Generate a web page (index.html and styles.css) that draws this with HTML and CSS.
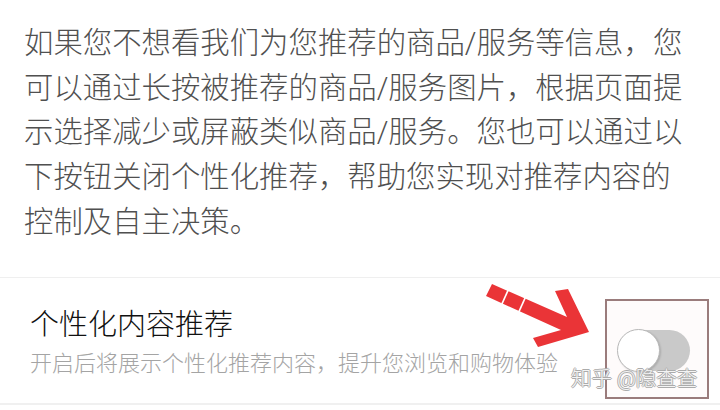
FILE: index.html
```html
<!DOCTYPE html>
<html lang="zh-CN">
<head>
<meta charset="utf-8">
<link rel="stylesheet" href="styles.css">
</head>
<body>
<div class="page">
  <p class="intro">如果您不想看我们为您推荐的商品/服务等信息，您可以通过长按被推荐的商品/服务图片，根据页面提示选择减少或屏蔽类似商品/服务。您也可以通过以下按钮关闭个性化推荐，帮助您实现对推荐内容的控制及自主决策。</p>
  <div class="setting">
    <div class="setting-text">
      <div class="setting-title">个性化内容推荐</div>
      <div class="setting-desc">开启后将展示个性化推荐内容，提升您浏览和购物体验</div>
    </div>
    <div class="frame">
      <div class="switch"><div class="knob"></div></div>
    </div>
  </div>
  <svg class="arrow" width="120" height="72" viewBox="0 0 120 72">
    <polygon points="12,6 87,39 75,13 88,11 109,54 58,69 53,60 81,52 6,18" fill="#ea3437"/>
    <line x1="28.6" y1="11.2" x2="21.4" y2="27.2" stroke="#fff" stroke-width="1.6"/>
    <line x1="45.6" y1="18.9" x2="38.4" y2="34.9" stroke="#fff" stroke-width="1.6"/>
  </svg>
  <div class="watermark">知乎 @隐查查</div>
</div>
</body>
</html>
```
FILE: styles.css
```css
html, body {
  margin: 0;
  padding: 0;
  background: #fff;
}
.page {
  position: relative;
  width: 720px;
  height: 410px;
  overflow: hidden;
  font-family: Roboto, "Noto Sans CJK SC", sans-serif;
  font-weight: 300;
}
.intro {
  margin: 0;
  padding: 21px 30px 0 24px;
  height: 256px;
  font-size: 29.4px;
  line-height: 44.7px;
  color: #505050;
}
.setting {
  display: flex;
  justify-content: space-between;
  align-items: flex-start;
  height: 125px;
  border-top: 1px solid #efefef;
  border-bottom: 2px solid #f0f0f0;
  padding: 0 11px 0 30px;
}
.setting-text {
  padding-top: 29px;
}
.setting-title {
  font-size: 29px;
  line-height: 36px;
  color: #111;
}
.setting-desc {
  margin-top: 6px;
  font-size: 22px;
  line-height: 30px;
  color: #a4a4a4;
}
.frame {
  margin-top: 21px;
  width: 100px;
  height: 96px;
  border: 2px solid #9a7c7c;
  background: #fefbfb;
  position: relative;
}
.switch {
  position: relative;
  margin: 29px 0 0 11px;
  width: 72px;
  height: 41px;
  border-radius: 21px;
  background: #c9c9c9;
}
.knob {
  position: absolute;
  left: -1px;
  top: -1px;
  width: 41px;
  height: 41px;
  border-radius: 50%;
  background: #fff;
  border: 1px solid #b8b8b8;
  box-shadow: 1px 1px 2px rgba(0,0,0,0.15);
}
.arrow {
  position: absolute;
  left: 480px;
  top: 278px;
}
.watermark {
  position: absolute;
  left: 571px;
  top: 366px;
  font-size: 20.5px;
  line-height: 26px;
  color: #f4f4f4;
  text-shadow: 1px 0 0 #ababab, -1px 0 0 #ababab, 0 1px 0 #ababab, 0 -1px 0 #ababab;
  white-space: nowrap;
}
```
